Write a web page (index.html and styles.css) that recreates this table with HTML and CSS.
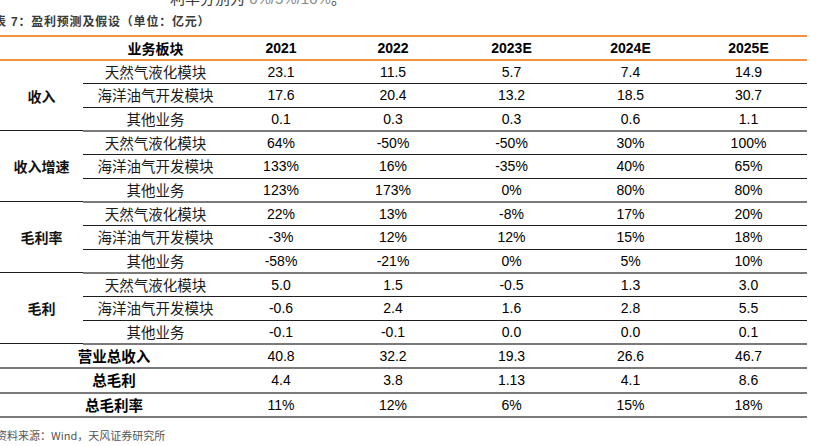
FILE: index.html
```html
<!DOCTYPE html>
<html lang="zh-CN">
<head>
<meta charset="utf-8">
<title>盈利预测及假设</title>
<link rel="stylesheet" href="styles.css">
</head>
<body>
<div class="page">
  <p class="lead">利率分别为 <span class="lead-num">0%/5%/10%</span>。</p>
  <p class="caption">表 7：盈利预测及假设（单位：亿元）</p>
  <table class="tbl">
    <colgroup>
      <col class="c-group"><col class="c-item"><col class="c-y1"><col class="c-y2"><col class="c-y3"><col class="c-y4"><col class="c-y5">
    </colgroup>
    <thead>
      <tr>
        <th></th><th>业务板块</th><th>2021</th><th>2022</th><th>2023E</th><th>2024E</th><th>2025E</th>
      </tr>
    </thead>
    <tbody>
      <tr class="sub"><td class="grp" rowspan="3">收入</td><td class="item">天然气液化模块</td><td>23.1</td><td>11.5</td><td>5.7</td><td>7.4</td><td>14.9</td></tr>
      <tr class="sub"><td class="item">海洋油气开发模块</td><td>17.6</td><td>20.4</td><td>13.2</td><td>18.5</td><td>30.7</td></tr>
      <tr class="end"><td class="item">其他业务</td><td>0.1</td><td>0.3</td><td>0.3</td><td>0.6</td><td>1.1</td></tr>

      <tr class="sub"><td class="grp" rowspan="3">收入增速</td><td class="item">天然气液化模块</td><td>64%</td><td>-50%</td><td>-50%</td><td>30%</td><td>100%</td></tr>
      <tr class="sub"><td class="item">海洋油气开发模块</td><td>133%</td><td>16%</td><td>-35%</td><td>40%</td><td>65%</td></tr>
      <tr class="end"><td class="item">其他业务</td><td>123%</td><td>173%</td><td>0%</td><td>80%</td><td>80%</td></tr>

      <tr class="sub"><td class="grp" rowspan="3">毛利率</td><td class="item">天然气液化模块</td><td>22%</td><td>13%</td><td>-8%</td><td>17%</td><td>20%</td></tr>
      <tr class="sub"><td class="item">海洋油气开发模块</td><td>-3%</td><td>12%</td><td>12%</td><td>15%</td><td>18%</td></tr>
      <tr class="end"><td class="item">其他业务</td><td>-58%</td><td>-21%</td><td>0%</td><td>5%</td><td>10%</td></tr>

      <tr class="sub"><td class="grp" rowspan="3">毛利</td><td class="item">天然气液化模块</td><td>5.0</td><td>1.5</td><td>-0.5</td><td>1.3</td><td>3.0</td></tr>
      <tr class="sub"><td class="item">海洋油气开发模块</td><td>-0.6</td><td>2.4</td><td>1.6</td><td>2.8</td><td>5.5</td></tr>
      <tr class="end"><td class="item">其他业务</td><td>-0.1</td><td>-0.1</td><td>0.0</td><td>0.0</td><td>0.1</td></tr>

      <tr class="end"><td class="total" colspan="2">营业总收入</td><td>40.8</td><td>32.2</td><td>19.3</td><td>26.6</td><td>46.7</td></tr>
      <tr class="end"><td class="total" colspan="2">总毛利</td><td>4.4</td><td>3.8</td><td>1.13</td><td>4.1</td><td>8.6</td></tr>
      <tr class="end"><td class="total" colspan="2">总毛利率</td><td>11%</td><td>12%</td><td>6%</td><td>15%</td><td>18%</td></tr>
    </tbody>
  </table>
  <p class="source">资料来源：Wind，天风证券研究所</p>
</div>
</body>
</html>
```

FILE: styles.css
```css
html, body {
  margin: 0;
  padding: 0;
  background: #ffffff;
}

body {
  width: 823px;
  height: 446px;
  overflow: hidden;
  font-family: "Liberation Sans", "Noto Sans CJK SC", sans-serif;
  color: #000;
}

.page {
  display: flex;
  flex-direction: column;
  align-items: flex-start;
}

.lead {
  margin: -9px 0 0 170px;
  font-size: 15px;
  line-height: 16px;
  color: #3a3a3a;
  white-space: nowrap;
}

.lead-num {
  color: #8a8a8a;
}

.caption {
  margin: 8px 0 0 -6px;
  font-size: 12px;
  letter-spacing: 0.8px;
  line-height: 14px;
  font-weight: bold;
  color: #3a3a3a;
  white-space: nowrap;
}

.tbl {
  margin-top: 6px;
  width: 807px;
  table-layout: fixed;
  border-collapse: collapse;
  font-size: 14px;
}

.c-group { width: 83px; }
.c-item { width: 145px; }
.c-y1 { width: 106px; }
.c-y2 { width: 118px; }
.c-y3 { width: 119px; }
.c-y4 { width: 119px; }
.c-y5 { width: 117px; }

.tbl th {
  height: 22px;
  padding: 0;
  font-weight: bold;
  font-size: 14px;
  text-align: center;
  border-top: 2px solid #f3913f;
  border-bottom: 2px solid #f3913f;
}

.tbl td {
  padding: 0;
  height: 22.33px;
  line-height: 18px;
  text-align: center;
  white-space: nowrap;
}

.tbl tr.sub td {
  border-bottom: 1px solid #1e1e1e;
}

.tbl tr.end td,
.tbl td.grp {
  border-bottom: 2px solid #7a7a7a;
}

.tbl td.grp {
  font-family: "Noto Sans CJK SC", sans-serif;
  font-weight: bold;
  font-size: 14px;
  color: #111;
}

.tbl td.item {
  font-family: "Noto Sans CJK SC", sans-serif;
  font-size: 14.5px;
  color: #1a1a1a;
}

.tbl td.total {
  font-family: "Noto Sans CJK SC", sans-serif;
  font-weight: bold;
  font-size: 14.5px;
}

.source {
  margin: 10px 0 0 -4px;
  font-family: "Noto Sans CJK SC", sans-serif;
  font-size: 11px;
  line-height: 14px;
  color: #555;
  white-space: nowrap;
}
```
